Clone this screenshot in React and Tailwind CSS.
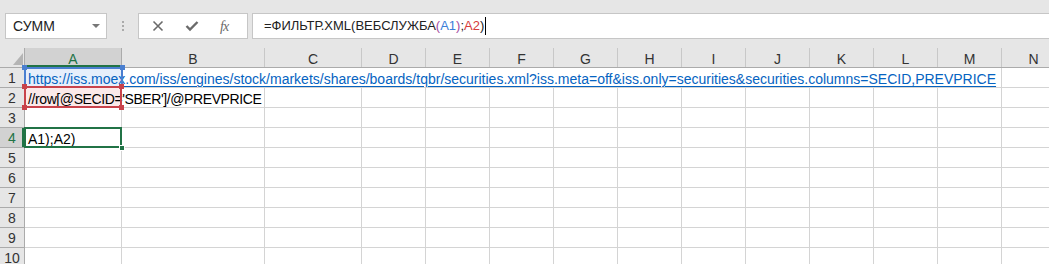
import React from 'react'

const COLS = [
  { k: 'A', w: 97 },
  { k: 'B', w: 143 },
  { k: 'C', w: 97 },
  { k: 'D', w: 64 },
  { k: 'E', w: 64 },
  { k: 'F', w: 64 },
  { k: 'G', w: 64 },
  { k: 'H', w: 64 },
  { k: 'I', w: 64 },
  { k: 'J', w: 64 },
  { k: 'K', w: 64 },
  { k: 'L', w: 64 },
  { k: 'M', w: 64 },
  { k: 'N', w: 64 },
]

const URL = 'https://iss.moex.com/iss/engines/stock/markets/shares/boards/tqbr/securities.xml?iss.meta=off&iss.only=securities&securities.columns=SECID,PREVPRICE'

const CELLS = {
  A1: { text: URL, link: true },
  A2: { text: "//row[@SECID='SBER']/@PREVPRICE", tight: true },
  A4: { text: 'A1);A2)' },
}

// row 1 text runs across B..M, so those cells lose their right gridline
function hideRight(r, k) {
  return r === 1 && k !== 'M' && k !== 'N'
}

function Handle({ className }) {
  return <span className={'absolute w-[5px] h-[5px] ' + className} />
}

function Toolbar() {
  return (
    <div className="h-[48px] flex items-start pt-[13px] pl-[5px]">
      <div className="w-[102px] h-[26px] bg-white border border-[#c6c6c6] flex items-center justify-between pl-[7px] pr-[6px]">
        <span className="text-[14px] text-[#222]">СУММ</span>
        <span className="w-0 h-0 border-l-[4px] border-r-[4px] border-t-[4px] border-l-transparent border-r-transparent border-t-[#777]" />
      </div>
      <div className="w-[31px] h-[26px] flex flex-col items-center justify-center gap-[2px]">
        <span className="w-[2px] h-[2px] bg-[#aaa]" />
        <span className="w-[2px] h-[2px] bg-[#aaa]" />
        <span className="w-[2px] h-[2px] bg-[#aaa]" />
      </div>
      <div className="w-[110px] h-[26px] bg-white border border-[#c6c6c6] flex items-center pl-[13px]">
        <svg width="12" height="12" viewBox="0 0 12 12">
          <path d="M1.5 1.5 L10.5 10.5 M10.5 1.5 L1.5 10.5" stroke="#6a6a6a" strokeWidth="1.6" />
        </svg>
        <svg className="ml-[21px]" width="14" height="12" viewBox="0 0 14 12">
          <path d="M1.5 6 L5 9.5 L12.5 2" stroke="#6a6a6a" strokeWidth="2.4" fill="none" />
        </svg>
        <span className="ml-[21px] text-[14px] italic text-[#6a6a6a] font-['Liberation_Serif',serif] tracking-[-1px]">fx</span>
      </div>
      <div className="ml-[4px] flex-1 h-[26px] bg-white border-y border-l border-[#c6c6c6] flex items-center pl-[11px] text-[13px] text-[#222]">
        <span>=ФИЛЬТР.XML(ВЕБСЛУЖБА</span>
        <span className="text-[#a34ba0]">(</span>
        <span className="text-[#3b7dd8]">A1</span>
        <span className="text-[#a34ba0]">)</span>
        <span>;</span>
        <span className="text-[#d63b3b]">A2</span>
        <span>)</span>
        <span className="w-[1px] h-[18px] bg-black ml-[1px]" />
      </div>
    </div>
  )
}

function HeaderRow() {
  return (
    <div className="flex h-[20px] border-b border-[#ababab] bg-[#e6e6e6]">
      <div className="w-[25px] shrink-0 border-r border-[#ababab] relative">
        <svg className="absolute left-[13px] top-[5px]" width="10" height="12" viewBox="0 0 10 12">
          <path d="M10 0 L10 12 L0 12 Z" fill="#b4b4b4" />
        </svg>
      </div>
      {COLS.map(c => (
        <div
          key={c.k}
          style={{ width: c.w }}
          className={
            'shrink-0 flex items-center justify-center pt-[3px] text-[14px] border-r ' +
            (c.k === 'A'
              ? 'bg-[#d2d2d2] text-[#217346] border-[#ababab] shadow-[inset_0_-2px_0_#217346]'
              : 'text-[#333] border-[#c8c8c8]')
          }
        >
          {c.k}
        </div>
      ))}
    </div>
  )
}

function Row({ r }) {
  const sel = r === 4
  return (
    <div className="flex h-[20px]">
      <div
        className={
          'w-[25px] shrink-0 flex items-center justify-center pt-[2px] text-[14px] border-r border-b border-[#ababab] ' +
          (sel ? 'bg-[#d2d2d2] text-[#217346] shadow-[inset_-2px_0_0_#217346]' : 'bg-[#e6e6e6] text-[#333]')
        }
      >
        {r}
      </div>
      {COLS.map(c => {
        const id = c.k + r
        const cell = CELLS[id]
        const bg = id === 'A1' ? 'bg-[#e6effb]' : id === 'A2' ? 'bg-[#fbe9e9]' : ''
        return (
          <div
            key={c.k}
            style={{ width: c.w }}
            className={
              'shrink-0 relative border-b border-[#d4d4d4] ' +
              (hideRight(r, c.k) ? '' : 'border-r ') + bg
            }
          >
            {cell && (
              <span
                className={
                  'absolute left-[3px] top-[2px] whitespace-nowrap text-[14px] leading-[18px] z-10 ' +
                  (cell.tight ? 'tracking-[-0.4px] ' : '') +
                  (cell.link ? 'text-[#0563c1] underline underline-offset-[2px]' : 'text-black')
                }
              >
                {cell.text}
              </span>
            )}
            {id === 'A1' && (
              <>
                <span className="absolute -left-[1px] -top-[1px] -right-[1px] -bottom-[1px] border-2 border-[#4a7fd0] z-20" />
                <Handle className="bg-[#4a7fd0] -left-[3px] -top-[3px] z-30" />
                <Handle className="bg-[#4a7fd0] -right-[3px] -top-[3px] z-30" />
              </>
            )}
            {id === 'A2' && (
              <>
                <span className="absolute -left-[1px] -top-[2px] -right-[1px] -bottom-[1px] border-2 border-[#c8434b] z-20" />
                <Handle className="bg-[#c8434b] -left-[3px] -top-[4px] z-30" />
                <Handle className="bg-[#c8434b] -right-[3px] -top-[4px] z-30" />
                <Handle className="bg-[#c8434b] -left-[3px] -bottom-[3px] z-30" />
                <Handle className="bg-[#c8434b] -right-[3px] -bottom-[3px] z-30" />
              </>
            )}
            {id === 'A4' && (
              <>
                <span className="absolute -left-[1px] -top-[1px] -right-[1px] -bottom-[1px] border-2 border-[#217346] z-20" />
                <span className="absolute -right-[4px] -bottom-[4px] w-[6px] h-[6px] bg-[#217346] border border-white z-30" />
              </>
            )}
          </div>
        )
      })}
    </div>
  )
}

export default function App() {
  return (
    <div className="w-[1049px] h-[264px] overflow-hidden bg-[#e6e6e6] font-['Liberation_Sans',Arial,sans-serif]">
      <Toolbar />
      <div className="bg-white">
        <HeaderRow />
        {[1, 2, 3, 4, 5, 6, 7, 8, 9, 10].map(r => (
          <Row key={r} r={r} />
        ))}
      </div>
    </div>
  )
}
